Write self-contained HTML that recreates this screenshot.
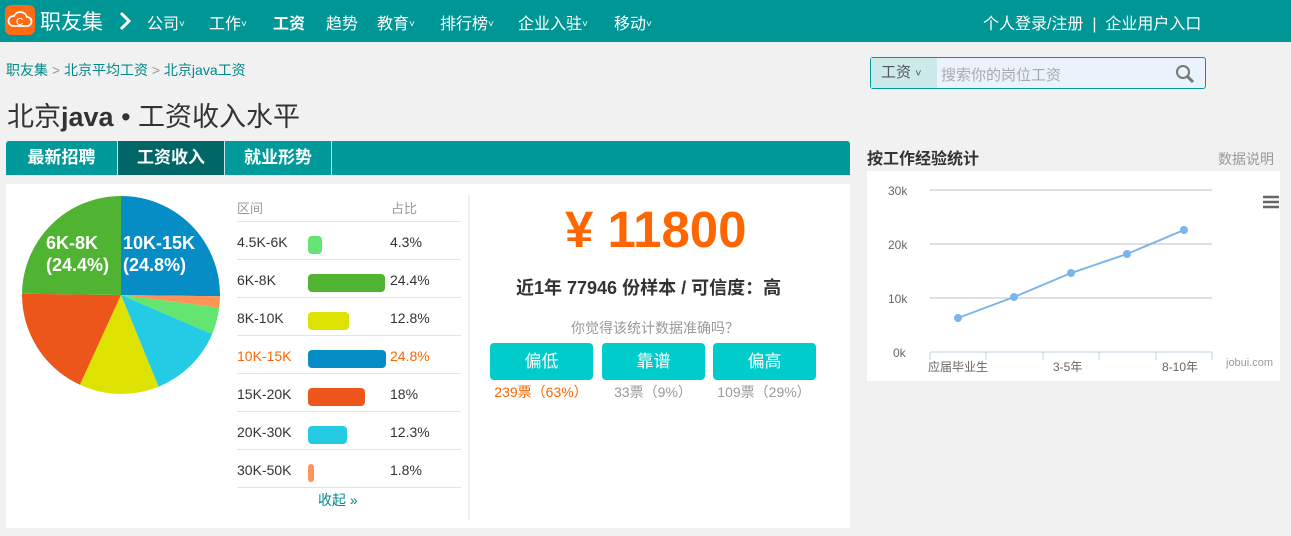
<!DOCTYPE html>
<html><head><meta charset="utf-8"><style>
*{margin:0;padding:0;box-sizing:border-box}
body{width:1291px;height:536px;background:#f1f1f1;font-family:"Liberation Sans","Noto Sans CJK SC",sans-serif;position:relative;overflow:hidden;color:#333}
.a{position:absolute;white-space:nowrap}
.nav{position:absolute;left:0;top:0;width:1291px;height:42px;background:#009696}
.nav .a{color:#fff;font-size:16px;top:10px}
.nav .c{font-size:10px;vertical-align:2px}
.tabs{position:absolute;left:6px;top:141px;width:844px;height:34px;background:#009a9a;border-radius:3px 3px 0 0}
.tab{position:absolute;top:0;height:34px;line-height:34px;color:#fff;font-weight:bold;font-size:17px;text-align:center;border-right:1px solid #c8e6e6}
.row{position:absolute;left:237px;width:224px;height:38px;border-top:1px solid #e3e3e3;font-size:14px}
.row span{position:absolute;top:12px}
.bar{position:absolute;top:14px;height:18px;border-radius:4px}
.btn{position:absolute;top:343px;height:37px;width:103px;background:#00cccc;border-radius:4px;color:#fff;font-size:17px;text-align:center;line-height:37px}
.v{position:absolute;top:382px;font-size:14px;color:#999;width:120px;text-align:center}
</style></head><body>
<div class="nav">
<div style="position:absolute;left:5px;top:5px;width:30px;height:30px;background:#ff6a13;border-radius:6px"></div>
<svg class="a" style="left:5px;top:5px" width="30" height="30"><path d="M8 21a5 5 0 0 1 1-10a7 7 0 0 1 13 1a4.5 4.5 0 0 1 0 9z" fill="none" stroke="#fff" stroke-width="1.8"/><text x="11" y="20" font-size="10" fill="#fff" font-family="Liberation Sans">C</text></svg>
<div class="a" style="left:40px;top:6px;font-size:21px">职友集</div>
<svg class="a" style="left:118px;top:11px" width="14" height="20"><path d="M3 2l8 8l-8 8" fill="none" stroke="#fff" stroke-width="3"/></svg>
<div class="a" style="left:147px">公司<span class="c">˅</span></div><div class="a" style="left:209px">工作<span class="c">˅</span></div>
<div class="a" style="left:273px;font-weight:bold">工资</div><div class="a" style="left:326px">趋势</div>
<div class="a" style="left:377px">教育<span class="c">˅</span></div><div class="a" style="left:440px">排行榜<span class="c">˅</span></div>
<div class="a" style="left:518px">企业入驻<span class="c">˅</span></div><div class="a" style="left:614px">移动<span class="c">˅</span></div>
<div class="a" style="left:983px;font-size:16px">个人登录/注册 &nbsp;|&nbsp; 企业用户入口</div>
</div>
<div class="a" style="left:6px;top:60px;font-size:14px;color:#00898a">职友集 <span style="color:#999">&gt;</span> 北京平均工资 <span style="color:#999">&gt;</span> 北京java工资</div>
<div class="a" style="left:7px;top:95px;font-size:27px;color:#333">北京<b>java</b> • 工资收入水平</div>
<div style="position:absolute;left:870px;top:57px;width:336px;height:32px;border:1px solid #00999a;border-radius:3px;background:#eaf2fb">
<div style="position:absolute;left:0;top:0;width:66px;height:30px;background:#cdeaea;font-size:15px;line-height:30px;padding-left:10px;color:#555">工资 <span style="font-size:11px">˅</span></div>
<div class="a" style="left:70px;top:6px;font-size:15px;color:#aaa">搜索你的岗位工资</div>
<svg class="a" style="left:304px;top:6px" width="20" height="20"><circle cx="8" cy="8" r="6" fill="none" stroke="#777" stroke-width="2"/><path d="M12 12l6 6" stroke="#777" stroke-width="3"/></svg>
</div>
<div class="tabs">
<div class="tab" style="left:0;width:112px">最新招聘</div>
<div class="tab" style="left:112px;width:107px;background:#006666">工资收入</div>
<div class="tab" style="left:219px;width:107px">就业形势</div>
</div>
<div style="position:absolute;left:6px;top:184px;width:844px;height:344px;background:#fff"></div>
<svg class="a" style="left:0;top:180px" width="240" height="230">
<g transform="translate(1,-180)">
<path d="M120 295L120 196A99 99 0 0 1 219 296.2Z" fill="#078dc6"/>
<path d="M120 295L219 296.2A99 99 0 0 1 218.2 307.7Z" fill="#ff9358"/>
<path d="M120 295L218.2 307.7A99 99 0 0 1 211.1 334.1Z" fill="#64e572"/>
<path d="M120 295L211.1 334.1A99 99 0 0 1 157.5 386.7Z" fill="#24cbe5"/>
<path d="M120 295L157.5 386.7A99 99 0 0 1 78.9 384.7Z" fill="#dde200"/>
<path d="M120 295L78.9 384.7A99 99 0 0 1 21 293.8Z" fill="#ed561b"/>
<path d="M120 295L21 293.8A99 99 0 0 1 120 196Z" fill="#50b432"/>
<g fill="#fff" font-weight="bold" font-size="18" font-family="Liberation Sans"><text x="45" y="249">6K-8K</text><text x="45" y="271">(24.4%)</text><text x="122" y="249">10K-15K</text><text x="122" y="271">(24.8%)</text></g>
</g></svg>
<div class="a" style="left:237px;top:198px;font-size:13px;color:#999">区间</div>
<div class="a" style="left:391px;top:198px;font-size:13px;color:#999">占比</div>
<div class="row" style="top:221px"><span style="left:0">4.5K-6K</span><div class="bar" style="left:71px;width:14px;background:#64e572"></div><span style="left:153px">4.3%</span></div>
<div class="row" style="top:259px"><span style="left:0">6K-8K</span><div class="bar" style="left:71px;width:77px;background:#50b432"></div><span style="left:153px">24.4%</span></div>
<div class="row" style="top:297px"><span style="left:0">8K-10K</span><div class="bar" style="left:71px;width:41px;background:#dde200"></div><span style="left:153px">12.8%</span></div>
<div class="row" style="top:335px;color:#ff6600"><span style="left:0">10K-15K</span><div class="bar" style="left:71px;width:78px;background:#078dc6"></div><span style="left:153px">24.8%</span></div>
<div class="row" style="top:373px"><span style="left:0">15K-20K</span><div class="bar" style="left:71px;width:57px;background:#ed561b"></div><span style="left:153px">18%</span></div>
<div class="row" style="top:411px"><span style="left:0">20K-30K</span><div class="bar" style="left:71px;width:39px;background:#24cbe5"></div><span style="left:153px">12.3%</span></div>
<div class="row" style="top:449px"><span style="left:0">30K-50K</span><div class="bar" style="left:71px;width:6px;background:#ff9358"></div><span style="left:153px">1.8%</span></div>
<div class="row" style="top:487px;height:1px"></div>
<div class="a" style="left:318px;top:490px;font-size:14px;color:#00898a">收起 »</div>
<div style="position:absolute;left:468px;top:195px;width:2px;height:325px;background:#eee"></div>
<div class="a" style="left:565px;top:200px;font-size:51px;font-weight:bold;color:#ff6600">¥ 11800</div>
<div class="a" style="left:516px;top:274px;font-size:18px;font-weight:bold;color:#333">近1年 77946 份样本 / 可信度：高</div>
<div class="a" style="left:571px;top:318px;font-size:14px;color:#999">你觉得该统计数据准确吗？</div>
<div class="btn" style="left:490px">偏低</div><div class="btn" style="left:602px">靠谱</div><div class="btn" style="left:713px">偏高</div>
<div class="v" style="left:481px;color:#ff6600">239票（63%）</div>
<div class="v" style="left:593px">33票（9%）</div>
<div class="v" style="left:704px">109票（29%）</div>
<div class="a" style="left:867px;top:145px;font-size:16px;font-weight:bold;color:#333">按工作经验统计</div>
<div class="a" style="left:1218px;top:149px;font-size:14px;color:#999">数据说明</div>
<div style="position:absolute;left:867px;top:171px;width:413px;height:210px;background:#fff"></div>
<svg class="a" style="left:867px;top:171px" width="424" height="210" font-family="Liberation Sans" font-size="12" fill="#666">
<g stroke="#c0c0c0"><path d="M63 19H345M63 73H345M63 127H345"/></g>
<path d="M63 181H345M63 181v8M119 181v8M176 181v8M232 181v8M289 181v8M345 181v8" stroke="#c0d0e0"/>
<text x="21" y="24">30k</text><text x="21" y="78">20k</text><text x="21" y="132">10k</text><text x="26" y="186">0k</text>
<text x="61" y="200" font-size="12">应届毕业生</text><text x="186" y="200">3-5年</text><text x="295" y="200">8-10年</text>
<text x="359" y="195" fill="#999" font-size="11">jobui.com</text>
<polyline points="91,147 147,126 204,102 260,83 317,59" fill="none" stroke="#7cb5ec" stroke-width="2"/>
<g fill="#7cb5ec"><circle cx="91" cy="147" r="4"/><circle cx="147" cy="126" r="4"/><circle cx="204" cy="102" r="4"/><circle cx="260" cy="83" r="4"/><circle cx="317" cy="59" r="4"/></g>
<path d="M396 26h16M396 31h16M396 36h16" stroke="#666" stroke-width="2.5"/>
</svg>
</body></html>
